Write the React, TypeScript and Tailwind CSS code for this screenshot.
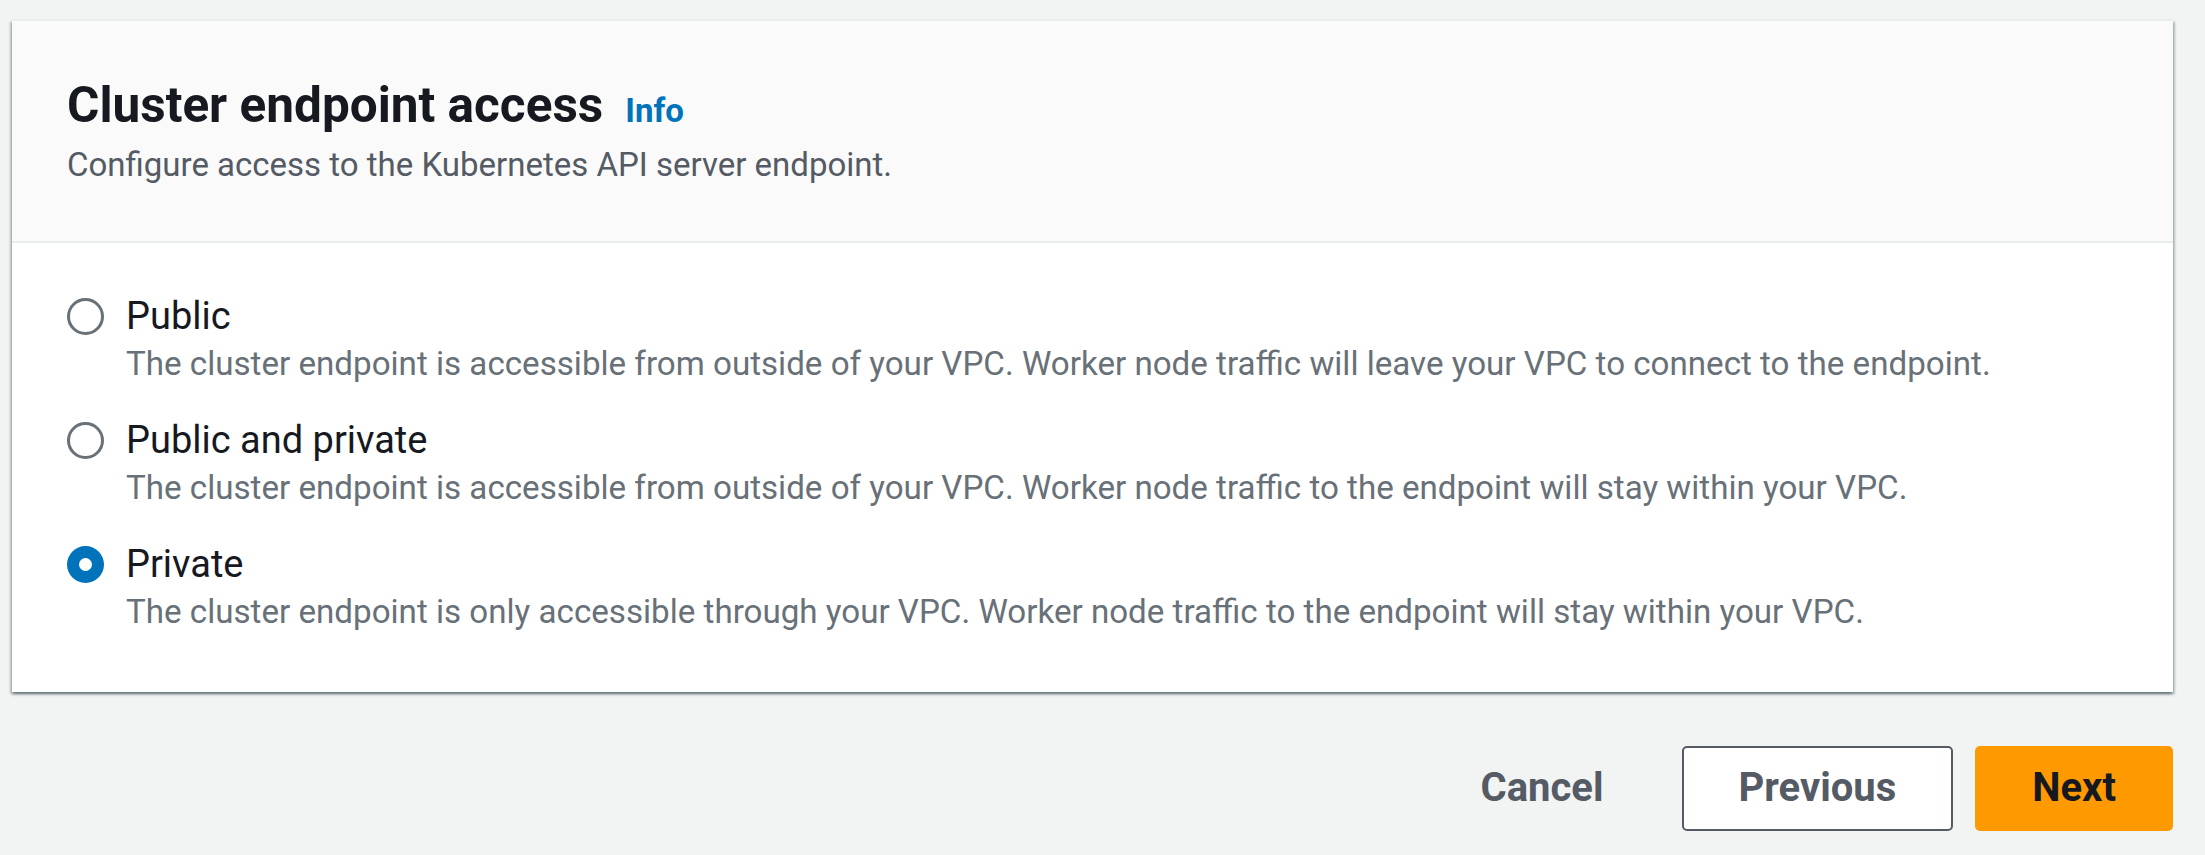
import React from "react";

const options = [
  {
    label: "Public",
    desc: "The cluster endpoint is accessible from outside of your VPC. Worker node traffic will leave your VPC to connect to the endpoint.",
    checked: false,
  },
  {
    label: "Public and private",
    desc: "The cluster endpoint is accessible from outside of your VPC. Worker node traffic to the endpoint will stay within your VPC.",
    checked: false,
  },
  {
    label: "Private",
    desc: "The cluster endpoint is only accessible through your VPC. Worker node traffic to the endpoint will stay within your VPC.",
    checked: true,
  },
];

function Radio({ checked }: { checked: boolean }) {
  if (checked) {
    return (
      <div className="w-[37px] h-[37px] rounded-full bg-[#0073bb] flex items-center justify-center">
        <div className="w-[13px] h-[13px] rounded-full bg-white" />
      </div>
    );
  }
  return <div className="w-[37px] h-[37px] rounded-full border-[3px] border-[#687078] bg-white" />;
}

export default function App() {
  return (
    <div
      className="min-h-[855px] bg-[#f2f3f3] pt-[20px] pl-[12px] pr-[32px]"
      style={{ fontFamily: "Roboto, 'Noto Sans', sans-serif" }}
    >
      <div className="bg-white shadow-[0_2px_3px_0_rgba(0,28,36,0.45),2px_2px_2px_0_rgba(0,28,36,0.15),-2px_2px_2px_0_rgba(0,28,36,0.15)] border-t border-[#eaeded]">
        <div className="bg-[#fafafa] border-b-2 border-[#eaeded] px-[55px] pt-[55px] pb-[55px]">
          <div className="flex items-baseline gap-[22px]">
            <h2 className="text-[49.5px] leading-[58px] font-bold text-[#16191f]">Cluster endpoint access</h2>
            <span className="text-[33px] font-bold text-[#0073bb]">Info</span>
          </div>
          <p className="mt-[8px] text-[33px] leading-[42px] text-[#545b64]">
            Configure access to the Kubernetes API server endpoint.
          </p>
        </div>
        <div className="px-[55px] pt-[47px] pb-[59px] flex flex-col gap-[29px]">
          {options.map((o) => (
            <div key={o.label} className="flex gap-[22px]">
              <div className="h-[53px] flex items-center">
                <Radio checked={o.checked} />
              </div>
              <div className="flex flex-col">
                <div className="text-[38px] leading-[53px] text-[#16191f]">{o.label}</div>
                <div className="text-[33.15px] leading-[42px] text-[#687078]">{o.desc}</div>
              </div>
            </div>
          ))}
        </div>
      </div>
      <div className="flex justify-end gap-[22px] mt-[54px]">
        <button className="h-[85px] px-[56px] text-[40px] font-bold text-[#545b64] bg-transparent">Cancel</button>
        <button className="h-[85px] px-[55px] text-[40px] font-bold text-[#545b64] bg-white border-2 border-[#545b64] rounded-[5px]">
          Previous
        </button>
        <button className="h-[85px] px-[57px] text-[40px] font-bold text-[#16191f] bg-[#ff9900] rounded-[5px]">Next</button>
      </div>
    </div>
  );
}
